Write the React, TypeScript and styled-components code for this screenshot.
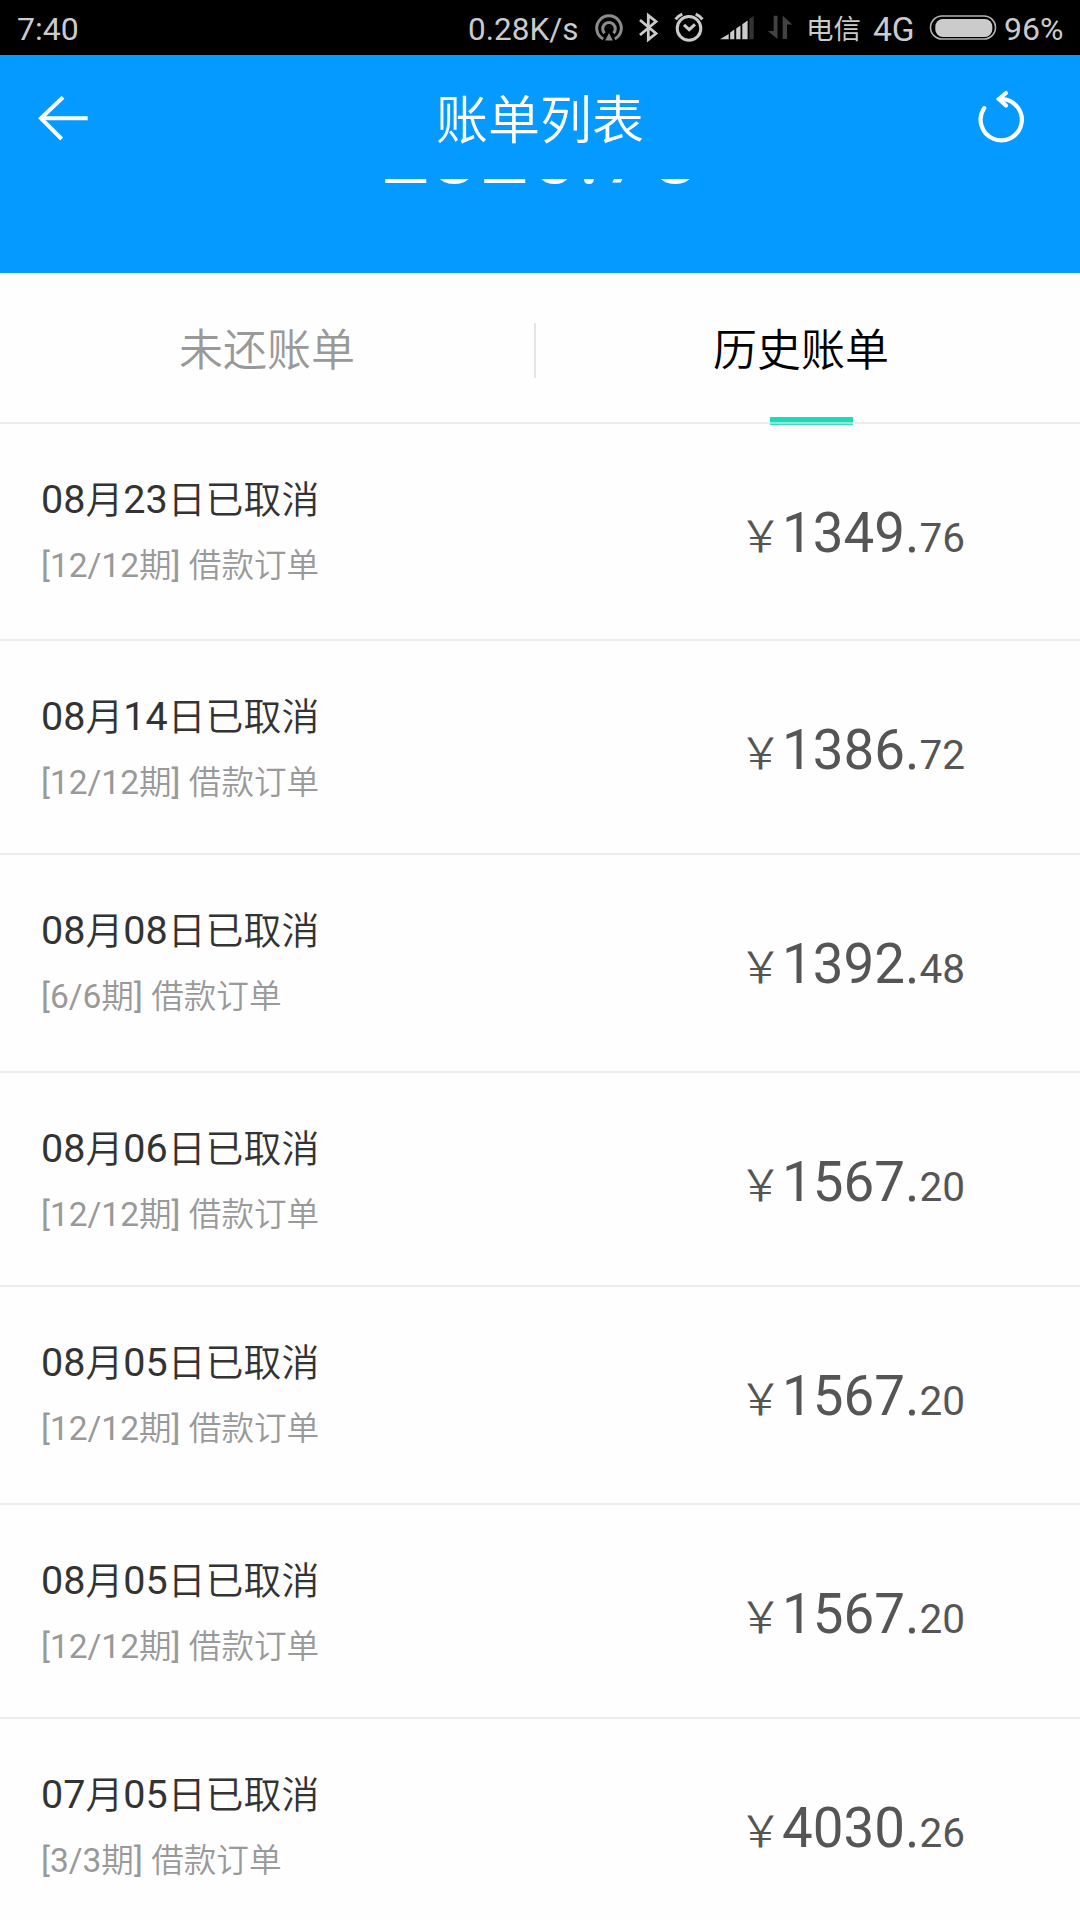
import React from "react";
import styled, { createGlobalStyle } from "styled-components";

const GlobalStyle = createGlobalStyle`
  * { box-sizing: border-box; }
  body {
    margin: 0;
    background: #fefefe;
    font-family: Roboto, "Noto Sans CJK SC", sans-serif;
  }
`;

const Screen = styled.div`
  width: 1080px;
  height: 1920px;
  overflow: hidden;
  background: #fefefe;
  display: flex;
  flex-direction: column;
`;

const StatusBar = styled.header`
  height: 55px;
  flex: none;
  background: #000;
  color: #cbcbcb;
  display: flex;
  align-items: center;
  padding-left: 17px;
  font-size: 32px;
  line-height: 51px;
`;

const StatusText = styled.span<{ $width: number; $gap?: number; $size?: number }>`
  flex: none;
  width: ${(p) => p.$width}px;
  margin-left: ${(p) => p.$gap ?? 0}px;
  font-size: ${(p) => p.$size ?? 32}px;
  white-space: nowrap;
  padding-top: 4px;
`;

const StatusIcon = styled.svg<{ $gap: number }>`
  flex: none;
  display: block;
  margin-left: ${(p) => p.$gap}px;
`;

const TitleBar = styled.nav`
  height: 124px;
  flex: none;
  background: #059aff;
  color: #fff;
  display: flex;
  align-items: center;
  justify-content: space-between;
  padding: 1px 53px 0 38px;
`;

const Title = styled.h1`
  margin: 9px 0 0 13px;
  font-size: 52px;
  line-height: 76px;
  font-weight: 350;
`;

const IconButton = styled.button`
  border: 0;
  padding: 0;
  background: none;
  display: flex;
`;

const Summary = styled.section`
  height: 94px;
  flex: none;
  background: #059aff;
  color: #fff;
  overflow: hidden;
  text-align: center;
`;

const Total = styled.div`
  margin-top: -76px;
  font-size: 88px;
  line-height: 100px;
`;

const Tabs = styled.div`
  height: 151px;
  flex: none;
  display: flex;
  align-items: center;
  border-bottom: 2px solid #ececec;
`;

const Tab = styled.div<{ $active?: boolean }>`
  position: relative;
  width: ${(p) => (p.$active ? 544 : 534)}px;
  height: 100%;
  display: flex;
  align-items: center;
  justify-content: center;
  padding: 0 ${(p) => (p.$active ? 14 : 0)}px 1px 0;
  font-size: 44px;
  font-weight: 350;
  color: ${(p) => (p.$active ? "#000" : "#999")};
`;

const TabDivider = styled.div`
  width: 2px;
  height: 55px;
  margin-top: 6px;
  background: #e4e4e4;
`;

const TabMarker = styled.span`
  position: absolute;
  left: 234px;
  bottom: -3px;
  width: 83px;
  height: 8px;
  background: linear-gradient(#1fdab8 0 5px, #8fe9d8 5px 7px, #3fd9bd 7px);
`;

const BillRow = styled.article<{ $height: number }>`
  height: ${(p) => p.$height}px;
  flex: none;
  display: flex;
  justify-content: space-between;
  border-bottom: 2px solid #ececec;
  padding: 48px 115px 0 41px;
`;

const BillInfo = styled.div`
  display: flex;
  flex-direction: column;
`;

const BillTitle = styled.div`
  font-size: 39.5px;
  line-height: 56px;
  color: #333;
  white-space: nowrap;
`;

const BillNote = styled.div`
  margin-top: 11px;
  font-size: 33.5px;
  line-height: 54px;
  color: #999;
  white-space: nowrap;
`;

const Han = styled.span<{ $size: number }>`
  font-size: ${(p) => p.$size}px;
  font-weight: 350;
`;

const Amount = styled.div`
  display: flex;
  align-items: baseline;
  height: 80px;
  margin-top: 21px;
  line-height: 80px;
  color: #555;
  font-size: 54.7px;
`;

const Yen = styled.span`
  font-size: 43px;
  font-family: "Noto Sans CJK SC", sans-serif;
  font-weight: 350;
  margin-right: 0;
`;

const Cents = styled.span`
  font-size: 40.5px;
`;

type Bill = { date: string; term: string; whole: string; cents: string; height: number };

const bills: Bill[] = [
  { date: "08月23日", term: "12/12", whole: "1349", cents: "76", height: 217 },
  { date: "08月14日", term: "12/12", whole: "1386", cents: "72", height: 214 },
  { date: "08月08日", term: "6/6", whole: "1392", cents: "48", height: 218 },
  { date: "08月06日", term: "12/12", whole: "1567", cents: "20", height: 214 },
  { date: "08月05日", term: "12/12", whole: "1567", cents: "20", height: 218 },
  { date: "08月05日", term: "12/12", whole: "1567", cents: "20", height: 214 },
  { date: "07月05日", term: "3/3", whole: "4030", cents: "26", height: 218 },
];

/* Chinese characters run slightly smaller than the digits beside them. */
function MixedText({ text, size }: { text: string; size: number }) {
  const runs = text.split(/([\u4e00-\u9fff]+)/).filter(Boolean);
  return (
    <>
      {runs.map((run, i) =>
        /[\u4e00-\u9fff]/.test(run) ? (
          <Han key={i} $size={size}>{run}</Han>
        ) : (
          <React.Fragment key={i}>{run}</React.Fragment>
        ),
      )}
    </>
  );
}

function StatusIcons() {
  return (
    <>
      <StatusIcon $gap={14} width="30" height="32" viewBox="594 12 30 32" fill="none" stroke="#8c8c8c" strokeWidth="3">
        <path d="M603.2 39 A12.3 12.3 0 1 1 614.8 39" />
        <path d="M604.5 33.2 A6.3 6.3 0 1 1 613.5 33.2" />
        <path d="M609 33 L612.8 40.5 H605.2 Z" fill="#8c8c8c" stroke="none" />
      </StatusIcon>
      <StatusIcon $gap={14} width="22" height="32" viewBox="638 12 22 32" fill="none" stroke="#cbcbcb" strokeWidth="2.8">
        <path d="M640 20 L656 33.5 L648.3 39.6 V15.4 L656 21.5 L640 35" />
      </StatusIcon>
      <StatusIcon $gap={13} width="32" height="32" viewBox="673 12 32 32" fill="none" stroke="#cbcbcb" strokeWidth="3">
        <circle cx="689" cy="28.4" r="11.8" />
        <path d="M684 24.8 L689.2 29.7 L695 24.3" />
        <path d="M675.6 19.4 Q678 16 682.3 14.2 M702.4 19.4 Q700 16 695.7 14.2" />
      </StatusIcon>
      <StatusIcon $gap={15} width="34" height="32" viewBox="720 12 34 32" fill="#cbcbcb">
        <path d="M720 39.3 L728.7 34 V39.3 Z M730.2 32.5 L734.3 29.6 V39.3 H730.2 Z M736.2 28.4 L740.5 25.5 V39.3 H736.2 Z M742.3 24.2 L747.6 20.6 V39.3 H742.3 Z" />
        <path d="M749.3 18.8 L753.7 16 V39.3 H749.3 Z" fill="#333" />
      </StatusIcon>
      <StatusIcon $gap={13} width="26" height="32" viewBox="767 12 26 32" fill="#424242">
        <path d="M773.7 15.8 H777.5 V39 L767.7 31 H773.7 Z" />
        <path d="M782.7 39 V15.8 L792.4 24.4 H787 V39 Z" />
      </StatusIcon>
    </>
  );
}

export default function App() {
  return (
    <>
      <GlobalStyle />
      <Screen>
        <StatusBar>
          <StatusText $width={63}>7:40</StatusText>
          <StatusText $width={112} $gap={388} $size={31.5}>0.28K/s</StatusText>
          <StatusIcons />
          <StatusText $width={56} $gap={13} $size={27.5}>电信</StatusText>
          <StatusText $width={44} $gap={11} $size={33.5}>4G</StatusText>
          <StatusIcon $gap={12} width="68" height="32" viewBox="928.5 12 68 32">
            <rect x="930" y="16" width="65" height="23" rx="11.5" fill="none" stroke="#b4b4b4" strokeWidth="1.6" />
            <rect x="934.8" y="19" width="57" height="18" rx="7.5" fill="#cbcbcb" />
          </StatusIcon>
          <StatusText $width={62} $gap={7}>96%</StatusText>
        </StatusBar>

        <TitleBar>
          <IconButton aria-label="返回">
            <svg width="52" height="50" viewBox="38 93 52 50" fill="none" stroke="#fff" strokeWidth="4">
              <path d="M87.7 118.2 H41" />
              <path d="M63 97.3 L41 118.3 L61.7 139" />
            </svg>
          </IconButton>
          <Title>账单列表</Title>
          <IconButton aria-label="刷新">
            <svg width="50" height="56" viewBox="977 89.5 50 56" fill="none" stroke="#fff" strokeWidth="4.2" strokeLinecap="round">
              <path d="M984.2 107.6 A20.6 20.6 0 1 0 1001.7 98.6 H999" />
              <path d="M1006 92.5 L999 98.5 L1006 105" />
            </svg>
          </IconButton>
        </TitleBar>

        <Summary>
          <Total>2826.78</Total>
        </Summary>

        <Tabs>
          <Tab>未还账单</Tab>
          <TabDivider />
          <Tab $active>
            历史账单
            <TabMarker />
          </Tab>
        </Tabs>

        {bills.map((bill, i) => (
          <BillRow key={i} $height={bill.height}>
            <BillInfo>
              <BillTitle>
                <MixedText text={bill.date + "已取消"} size={37.9} />
              </BillTitle>
              <BillNote>
                <MixedText text={`[${bill.term}期] 借款订单`} size={32.6} />
              </BillNote>
            </BillInfo>
            <Amount>
              <Yen>￥</Yen>
              {bill.whole}.<Cents>{bill.cents}</Cents>
            </Amount>
          </BillRow>
        ))}
      </Screen>
    </>
  );
}
